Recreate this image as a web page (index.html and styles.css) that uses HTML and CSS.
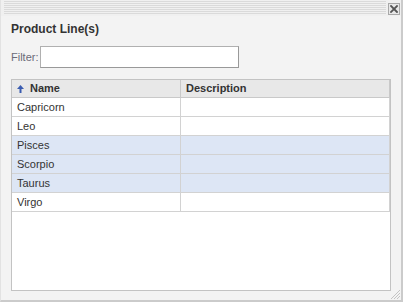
FILE: index.html
```html
<!DOCTYPE html>
<html>
<head>
<meta charset="utf-8">
<link rel="stylesheet" href="styles.css">
</head>
<body>
<div class="window">
  <div class="titlebar">
    <div class="stripes"></div>
    <div class="close">
      <svg width="8" height="8" viewBox="0 0 8 8"><path d="M1 1 L7 7 M7 1 L1 7" stroke="#555" stroke-width="1.8" stroke-linecap="square"/></svg>
    </div>
  </div>
  <div class="body">
    <div class="heading">Product Line(s)</div>
    <div class="filter">
      <label class="filter-label">Filter:</label>
      <input class="filter-input" type="text">
    </div>
    <div class="grid">
      <table class="table">
        <colgroup><col class="col-name"><col class="col-desc"></colgroup>
        <thead>
          <tr>
            <th><svg class="sort" width="7" height="8" viewBox="0 0 7 8"><path d="M3.5 0 L7 4 L4.5 4 L4.5 8 L2.5 8 L2.5 4 L0 4 Z" fill="#3a5cb0"/></svg>Name</th>
            <th>Description</th>
          </tr>
        </thead>
        <tbody>
          <tr><td>Capricorn</td><td></td></tr>
          <tr><td>Leo</td><td></td></tr>
          <tr class="sel"><td>Pisces</td><td></td></tr>
          <tr class="sel"><td>Scorpio</td><td></td></tr>
          <tr class="sel"><td>Taurus</td><td></td></tr>
          <tr><td>Virgo</td><td></td></tr>
        </tbody>
      </table>
    </div>
  </div>
  <svg class="grip" width="11" height="11" viewBox="0 0 11 11">
    <path d="M10 1 L1 10 M10 4 L4 10 M10 7 L7 10" stroke="#c4c4c4" stroke-width="1"/>
  </svg>
</div>
</body>
</html>
```

FILE: styles.css
```css
html, body {
  margin: 0;
  padding: 0;
  background: #f3f3f3;
}
.window {
  position: relative;
  width: 403px;
  height: 302px;
  box-sizing: border-box;
  background: #f3f3f3;
  border-left: 1px solid #e2e2e2;
  border-right: 2px solid #cbcbcb;
  border-bottom: 2px solid #cbcbcb;
  font-family: "Liberation Sans", Arial, sans-serif;
  font-size: 11px;
  color: #333;
}
.titlebar {
  display: flex;
  align-items: flex-start;
  height: 16px;
  padding: 1px 0 0 3px;
  box-sizing: border-box;
  background: #f0f0f0;
}
.stripes {
  flex: 1;
  height: 13px;
  background: repeating-linear-gradient(to bottom, #dadada 0, #dadada 1px, #f0f0f0 1px, #f0f0f0 2px);
}
.close {
  width: 10px;
  height: 10px;
  margin: 2px 1px 0 2px;
  border: 1px solid #a8a8a8;
  background: #e8e8e8;
  display: flex;
  align-items: center;
  justify-content: center;
}
.body {
  padding: 6px 0 0 10px;
}
.heading {
  font-size: 12px;
  font-weight: bold;
  line-height: 14px;
  color: #333;
}
.filter {
  display: flex;
  align-items: center;
  margin-top: 10px;
}
.filter-label {
  color: #6b6b78;
  font-size: 11px;
  margin-right: 1px;
}
.filter-input {
  width: 199px;
  height: 22px;
  box-sizing: border-box;
  border: 1px solid;
  border-color: #b0b0b0 #999 #999 #b0b0b0;
  background: #fff;
  margin: 0;
  padding: 0;
}
.grid {
  margin-top: 11px;
  width: 380px;
  height: 212px;
  box-sizing: border-box;
  border: 1px solid #c3c3c3;
  background: #fff;
}
.table {
  border-collapse: separate;
  border-spacing: 0;
  table-layout: fixed;
  width: 378px;
}
.col-name { width: 169px; }
.col-desc { width: 209px; }
.table th {
  height: 18px;
  padding: 0 0 0 5px;
  background: #e8e8e8;
  text-align: left;
  font-weight: bold;
  font-size: 11px;
  color: #333;
  border-right: 1px solid #c9c9c9;
  border-bottom: 1px solid #c9c9c9;
  box-sizing: border-box;
  line-height: 17px;
  white-space: nowrap;
}
.sort {
  margin: 0 6px 0 0;
  vertical-align: -1px;
}
.table td {
  height: 19px;
  padding: 0 0 0 5px;
  border-right: 1px solid #d2d2d2;
  border-bottom: 1px solid #d2d2d2;
  box-sizing: border-box;
  line-height: 18px;
  color: #333;
}
.table tr.sel td {
  background: #dde6f5;
}
.grip {
  position: absolute;
  right: 0;
  bottom: 0;
}
```
